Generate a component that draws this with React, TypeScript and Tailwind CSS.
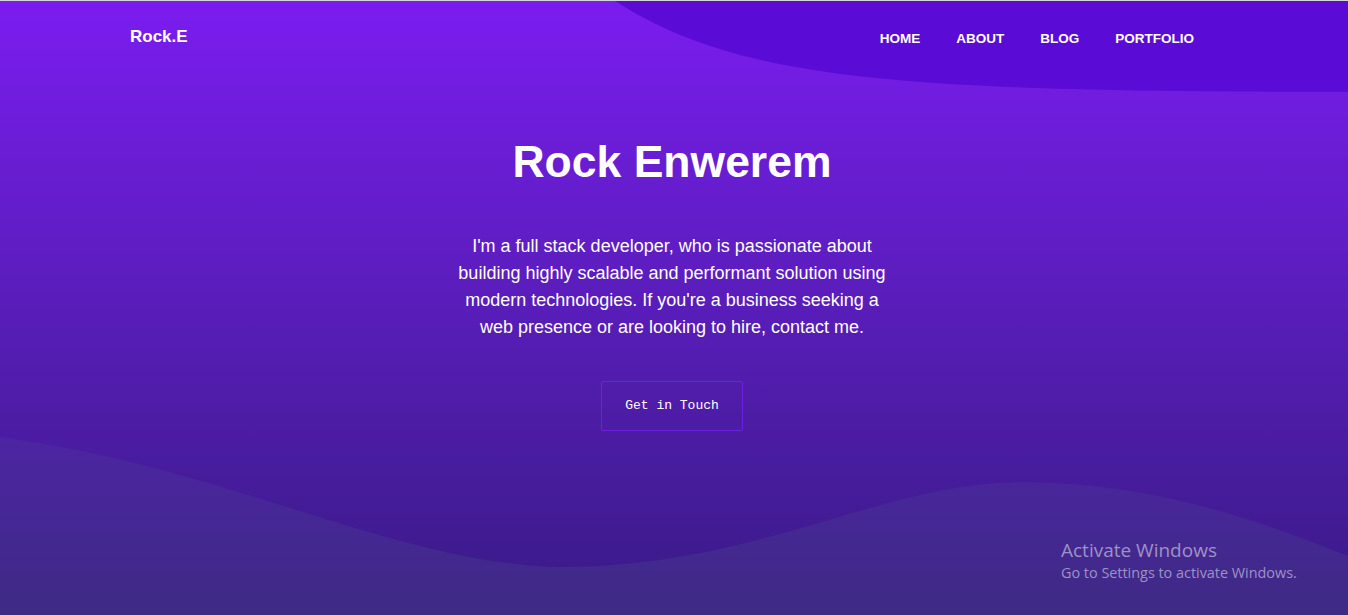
const navLinks = ["HOME", "ABOUT", "BLOG", "PORTFOLIO"];

const Waves = () => (
  <svg
    className="absolute inset-0 h-full w-full"
    viewBox="0 0 1348 615"
    preserveAspectRatio="none"
  >
    <defs>
      <linearGradient id="lowWave" x1="0" y1="0" x2="0" y2="1">
        <stop offset="0%" stopColor="#4c25a2" />
        <stop offset="100%" stopColor="#3e2a84" />
      </linearGradient>
    </defs>
    <path d="M615,0 C740,80 900,91 1348,91 L1348,0 Z" fill="#5b0bd6" />
    <path
      d="M0,437 C220,465 400,565 560,567 C760,567 880,482 1023,482 C1150,482 1260,520 1348,556 L1348,615 L0,615 Z"
      fill="url(#lowWave)"
    />
  </svg>
);

export default function App() {
  return (
    <div
      className="relative h-[615px] w-full overflow-hidden border-t border-[#d6d6d6] bg-linear-to-b from-[#7b1cf0] to-[#381a85] text-white"
      style={{ fontFamily: '"Liberation Sans", Arial, sans-serif' }}
    >
      <Waves />

      <div className="relative z-10 flex flex-col">
        <header className="flex h-[73px] items-center justify-between pl-[130px] pr-[154px]">
          <a href="#" className="-mt-[1px] text-[17px] font-bold">
            Rock.E
          </a>
          <nav className="mt-[3px] flex gap-9">
            {navLinks.map((link) => (
              <a key={link} href="#" className="text-[13.5px] font-bold">
                {link}
              </a>
            ))}
          </nav>
        </header>

        <section className="flex flex-col items-center pr-[4px]">
          <h1 className="mt-[66px] text-[44.5px] font-bold leading-none">
            Rock Enwerem
          </h1>
          <p className="mt-[48px] w-[440px] text-center text-[18px] leading-[27px]">
            I'm a full stack developer, who is passionate about building highly
            scalable and performant solution using modern technologies. If
            you're a business seeking a web presence or are looking to hire,
            contact me.
          </p>
          <button
            className="mt-[40px] flex h-[50px] w-[142px] items-center justify-center rounded-[2px] border border-[#6b21e0] text-[13px]"
            style={{ fontFamily: '"Liberation Mono", "Courier New", monospace' }}
          >
            Get in Touch
          </button>
        </section>
      </div>

      <div
        className="absolute left-[1061px] top-[537px] z-10 text-[#9d92c4]"
        style={{ fontFamily: '"Open Sans", "Noto Sans", sans-serif' }}
      >
        <div className="text-[19px] leading-[25px]">Activate Windows</div>
        <div className="text-[14.4px] leading-[20px]">
          Go to Settings to activate Windows.
        </div>
      </div>
    </div>
  );
}
